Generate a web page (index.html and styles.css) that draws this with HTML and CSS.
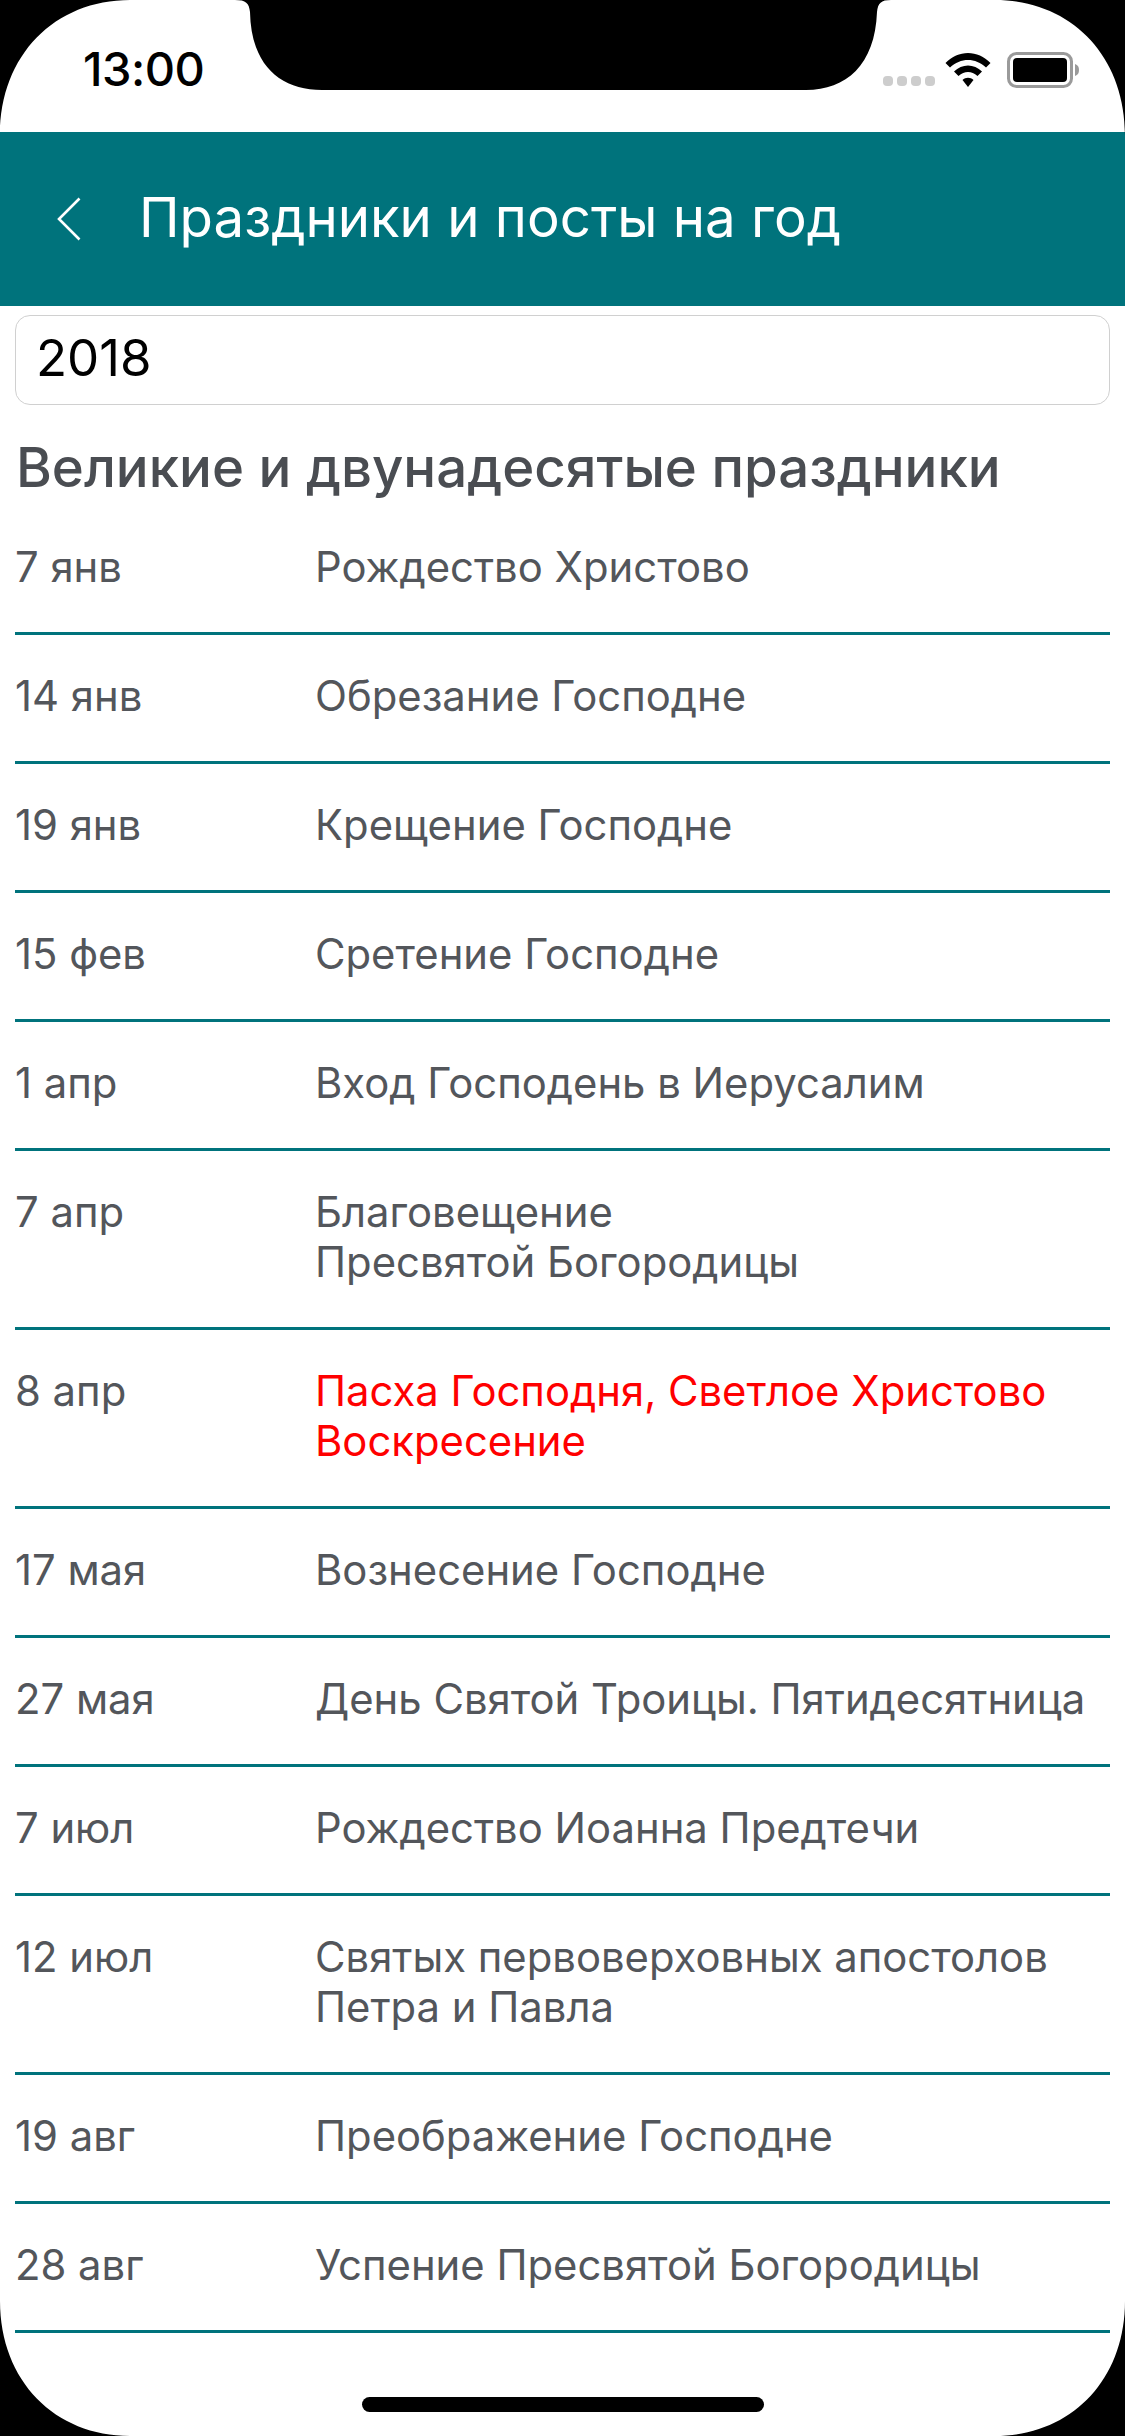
FILE: index.html
```html
<!DOCTYPE html>
<html lang="en">
<head>
  <meta charset="UTF-8" />
  <title>Праздники и посты на год</title>
  <link rel="stylesheet" href="styles.css">
</head>
<body>
  <div class="screen">
    <svg class="notch" width="656" height="91" viewBox="235 0 656 91">
      <path d="M235 0 H891 C881 0 878 3 877 12 C875 65 846 90 806 90 H322 C280 90 251 65 250 12 C249 3 246 0 235 0 Z" fill="#000"/>
    </svg>
    <div class="status">
      <span class="time">13:00</span>
      <div class="status-icons">
        <div class="dots"><i></i><i></i><i></i><i></i></div>
        <svg class="wifi" width="46" height="36" viewBox="0 0 46 36">
          <path d="M0.5 11 C13 -2.5 33 -2.5 45.5 11 L41 15.5 C30.5 5.5 15.5 5.5 5 15.5 Z" fill="#000"/>
          <path d="M9 19.5 C17 11.5 29 11.5 37 19.5 L32.5 24 C26.5 18.8 19.5 18.8 13.5 24 Z" fill="#000"/>
          <path d="M17.5 28 C20.5 25 25.5 25 28.5 28 L23 35 Z" fill="#000"/>
        </svg>
        <svg class="battery" width="74" height="36" viewBox="0 0 74 36">
          <rect x="1.5" y="1.5" width="63" height="33" rx="8" fill="none" stroke="#9a9a9a" stroke-width="3"/>
          <rect x="6" y="6" width="54" height="24" rx="4" fill="#000"/>
          <path d="M68 12 C71 13 72 15 72 18 C72 21 71 23 68 24 Z" fill="#9a9a9a"/>
        </svg>
      </div>
    </div>
    <header class="appbar">
      <svg class="back" width="24" height="44" viewBox="0 0 24 44">
        <path d="M22.5 1.5 L2 22 L22.5 42.5" fill="none" stroke="#fff" stroke-width="2.6"/>
      </svg>
      <h1 class="title">Праздники и посты на год</h1>
    </header>
    <div class="year">2018</div>
    <h2 class="section">Великие и двунадесятые праздники</h2>
    <ul class="list">
      <li class="row"><span class="date">7 янв</span><span class="name">Рождество Христово</span></li>
      <li class="row"><span class="date">14 янв</span><span class="name">Обрезание Господне</span></li>
      <li class="row"><span class="date">19 янв</span><span class="name">Крещение Господне</span></li>
      <li class="row"><span class="date">15 фев</span><span class="name">Сретение Господне</span></li>
      <li class="row"><span class="date">1 апр</span><span class="name">Вход Господень в Иерусалим</span></li>
      <li class="row"><span class="date">7 апр</span><span class="name">Благовещение<br>Пресвятой Богородицы</span></li>
      <li class="row"><span class="date">8 апр</span><span class="name red">Пасха Господня, Светлое Христово<br>Воскресение</span></li>
      <li class="row"><span class="date">17 мая</span><span class="name">Вознесение Господне</span></li>
      <li class="row"><span class="date">27 мая</span><span class="name">День Святой Троицы. Пятидесятница</span></li>
      <li class="row"><span class="date">7 июл</span><span class="name">Рождество Иоанна Предтечи</span></li>
      <li class="row"><span class="date">12 июл</span><span class="name">Святых первоверховных апостолов<br>Петра и Павла</span></li>
      <li class="row"><span class="date">19 авг</span><span class="name">Преображение Господне</span></li>
      <li class="row"><span class="date">28 авг</span><span class="name">Успение Пресвятой Богородицы</span></li>
    </ul>
    <div class="home"></div>
    <svg class="corner corner-tl" width="130" height="135" viewBox="0 0 130 135"><path d="M0 0 H130 C55 0 0 55 0 135 Z" fill="#000"/></svg>
    <svg class="corner corner-tr" width="130" height="135" viewBox="0 0 130 135"><path d="M130 0 H0 C75 0 130 55 130 135 Z" fill="#000"/></svg>
    <svg class="corner corner-bl" width="130" height="135" viewBox="0 0 130 135"><path d="M0 135 H130 C55 135 0 80 0 0 Z" fill="#000"/></svg>
    <svg class="corner corner-br" width="130" height="135" viewBox="0 0 130 135"><path d="M130 135 H0 C75 135 130 80 130 0 Z" fill="#000"/></svg>
  </div>
</body>
</html>
```

FILE: styles.css
```css
html, body {
  margin: 0;
  padding: 0;
  background: #fff;
}

.screen {
  position: relative;
  width: 1125px;
  height: 2436px;
  overflow: hidden;
  background: #fff;
  font-family: Inter, Roboto, sans-serif;
}

/* status bar */
.status {
  height: 132px;
  display: flex;
  justify-content: space-between;
  box-sizing: border-box;
  padding: 44px 44px 0 83px;
}
.time {
  font-size: 47px;
  line-height: 50px;
  font-weight: 500;
  letter-spacing: -0.5px;
  color: #000;
}
.status-icons {
  display: flex;
  align-items: flex-start;
  gap: 16px;
  padding-top: 8px;
}
.dots {
  display: flex;
  gap: 4px;
  margin-top: 24px;
  margin-right: -6px;
}
.dots i {
  width: 10px;
  height: 10px;
  border-radius: 4px;
  background: #cdcdcd;
}
.notch {
  position: absolute;
  left: 235px;
  top: 0;
}

/* app bar */
.appbar {
  height: 174px;
  background: #00737c;
  display: flex;
  align-items: center;
  padding-left: 57px;
}
.back {
  flex: none;
  margin-right: 58px;
}
.title {
  margin: 0 0 4px;
  color: #fff;
  font-size: 54.6px;
  font-weight: 400;
  line-height: 60px;
}

.year {
  margin: 9px 15px 0;
  height: 90px;
  box-sizing: border-box;
  border: 1.5px solid #d0d0d0;
  border-radius: 15px;
  padding-left: 20px;
  font-size: 51px;
  line-height: 84px;
  color: #000;
}

.section {
  margin: 29px 16px 0;
  font-size: 54.6px;
  line-height: 66px;
  font-weight: 500;
  color: #4a4d52;
}

/* list */
.list {
  list-style: none;
  margin: 6px 15px 0;
  padding: 0;
}
.row {
  display: flex;
  border-bottom: 3px solid #00737c;
  padding: 36px 0 40px;
  font-size: 41.8px;
  line-height: 50px;
  color: #53565b;
}
.date {
  flex: none;
  width: 300px;
  box-sizing: border-box;
}
.red {
  color: #ff0000;
}

.home {
  position: absolute;
  left: 362px;
  bottom: 24px;
  width: 402px;
  height: 15px;
  border-radius: 8px;
  background: #000;
}

/* device corners */
.corner {
  position: absolute;
}
.corner-tl { left: 0; top: 0; }
.corner-tr { right: 0; top: 0; }
.corner-bl { left: 0; bottom: 0; }
.corner-br { right: 0; bottom: 0; }
```
